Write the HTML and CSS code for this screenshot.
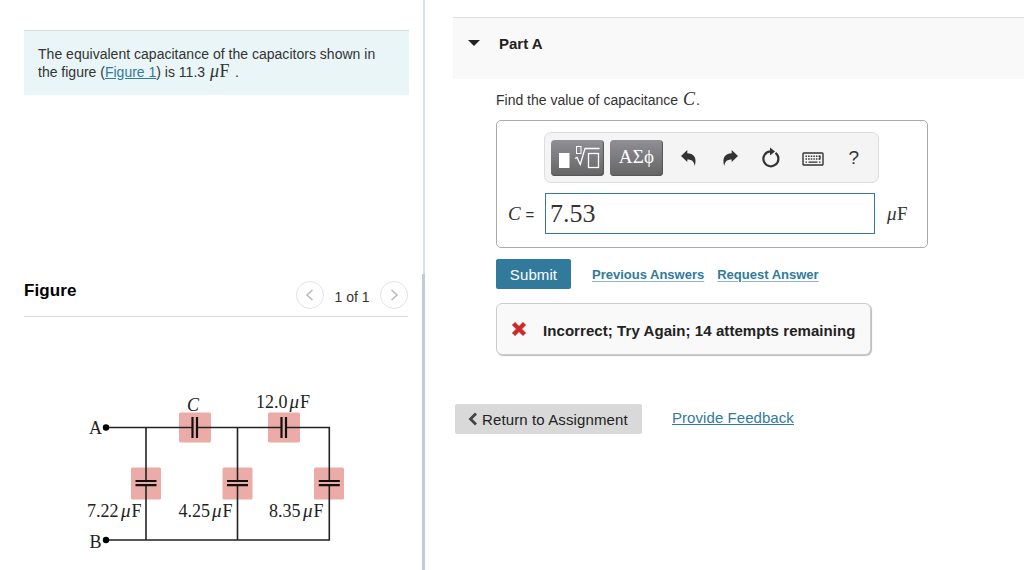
FILE: index.html
```html
<!DOCTYPE html>
<html lang="en">
<head>
    <meta charset="UTF-8">
    <meta name="viewport" content="width=device-width, initial-scale=1.0">
    <title>Equivalent capacitance - Part A</title>
    <link rel="stylesheet" href="styles.css">
</head>
<body>

    <aside class="left-panel">
        <div class="problem">
            <span class="line-one">The equivalent capacitance of the capacitors shown in</span><br>
            the figure (<a href="#figure">Figure 1</a>) is 11.3 <span class="math"><i>μ</i>F</span> .
        </div>

        <section id="figure">
            <div class="figure-header">
                <h2>Figure</h2>
                <div class="pager">
                    <button type="button" class="pager-btn" aria-label="Previous">
                        <svg width="10" height="14" viewBox="0 0 10 14"><path d="M7.5 2 L2 7 L7.5 12"/></svg>
                    </button>
                    <span class="pager-text">1 of 1</span>
                    <button type="button" class="pager-btn" aria-label="Next">
                        <svg width="10" height="14" viewBox="0 0 10 14"><path d="M2.5 2 L8 7 L2.5 12"/></svg>
                    </button>
                </div>
            </div>

            <svg class="circuit" width="384" height="253" viewBox="24 317 384 253">
                <!-- capacitor backgrounds -->
                <g class="cap-bg">
                    <rect x="179" y="412.500" width="32" height="30" rx="1.500"/>
                    <rect x="268" y="412.500" width="32" height="30" rx="1.500"/>
                    <rect x="131" y="467.500" width="30" height="32" rx="1.500"/>
                    <rect x="222.500" y="467.500" width="30" height="32" rx="1.500"/>
                    <rect x="314" y="467.500" width="30" height="32" rx="1.500"/>
                </g>
                <!-- wires -->
                <path class="wire" d="M106 427.500 H192.500 M197.500 427.500 H281 M286.500 427.500 H329.300 V481 M329.300 485.500 V540 H106 M146 427.500 V481 M146 485.500 V540 M237.500 427.500 V481 M237.500 485.500 V540"/>
                <!-- plates -->
                <path class="plate" d="M192.500 417 V438 M197 417 V438 M281.500 417 V438 M286 417 V438 M135.500 481 H156.500 M135.500 485.200 H156.500 M227 481 H248 M227 485.200 H248 M318.800 481 H339.800 M318.800 485.200 H339.800"/>
                <circle cx="106" cy="427.500" r="3.200"/>
                <circle cx="106" cy="540" r="3.200"/>
                <!-- labels -->
                <g class="labels">
                    <text x="89" y="434">A</text>
                    <text x="89.500" y="547.500">B</text>
                    <text x="187" y="411" font-style="italic">C</text>
                    <text x="256" y="407.500">12.0<tspan class="mu" x="289.500">μ</tspan><tspan x="300">F</tspan></text>
                    <text x="87" y="516.500">7.22<tspan class="mu" x="121">μ</tspan><tspan x="131.500">F</tspan></text>
                    <text x="178.500" y="516.500">4.25<tspan class="mu" x="212">μ</tspan><tspan x="222.500">F</tspan></text>
                    <text x="269" y="517">8.35<tspan class="mu" x="303">μ</tspan><tspan x="313.500">F</tspan></text>
                </g>
            </svg>
        </section>
    </aside>

    <div class="divider"><div class="divider-thumb"></div></div>

    <main class="main-content">
        <header class="part-header">
            <span class="caret"></span>
            <h2>Part A</h2>
        </header>

        <section class="part-body">
            <p class="question">Find the value of capacitance <i class="math">C</i>.</p>

            <form class="answer-box">
                <div class="toolbar">
                    <button type="button" class="tool-dark" aria-label="Templates">
                        <svg width="53" height="36" viewBox="0 0 53 36">
                            <rect x="8" y="13" width="10.500" height="15" fill="#fff"/>
                            <g fill="none" stroke="#fff">
                                <rect x="25.500" y="6.500" width="4.500" height="7"/>
                                <path d="M24 18.500 L26 17.500 L29.300 24.500 L34 8.500 H48.500" stroke-width="1.300"/>
                                <rect x="37.500" y="13.500" width="10" height="14" stroke-width="1.300"/>
                            </g>
                        </svg>
                    </button>
                    <button type="button" class="tool-dark greek">ΑΣϕ</button>
                    <button type="button" class="tool" aria-label="Undo">
                        <svg width="18" height="18" viewBox="0 0 18 18"><path d="M1 7 L7.300 1 V4.300 C13 4.500 17.500 8 14.800 17 C14 12.500 12 10.500 7.300 10.500 V13 Z"/></svg>
                    </button>
                    <button type="button" class="tool" aria-label="Redo">
                        <svg width="18" height="18" viewBox="0 0 18 18"><path d="M17 7 L10.700 1 V4.300 C5 4.500 .5 8 3.200 17 C4 12.500 6 10.500 10.700 10.500 V13 Z"/></svg>
                    </button>
                    <button type="button" class="tool" aria-label="Reset">
                        <svg width="20" height="22" viewBox="0 0 20 22"><path d="M14.500 5.800 A7.500 7.500 0 1 1 9 4.300" fill="none" stroke="#333" stroke-width="2.200"/><path d="M9 0.500 L14 4.500 L9 8.500 Z"/></svg>
                    </button>
                    <button type="button" class="tool keyboard" aria-label="Keyboard shortcuts">
                        <svg width="22" height="14" viewBox="0 0 22 14">
                            <rect x="1" y="1" width="20" height="12" rx=".8" fill="none" stroke="#333" stroke-width="1.400"/>
                            <path d="M3.500 4.300 H19 M3.500 7 H19" fill="none" stroke="#333" stroke-width="1.500" stroke-dasharray="1.500 1.100"/>
                            <path d="M3.500 10.200 H5 M6.500 10.200 H15.500 M17 10.200 H18.500 M18 3.500 V7.500" fill="none" stroke="#333" stroke-width="1.300"/>
                        </svg>
                    </button>
                    <button type="button" class="tool help">?</button>
                </div>

                <div class="answer-row">
                    <label for="answer"><i>C</i> <span>=</span></label>
                    <input type="text" id="answer" value="7.53">
                    <span class="unit"><i>μ</i>F</span>
                </div>
            </form>

            <div class="actions">
                <button type="button" class="submit">Submit</button>
                <a href="#" class="previous">Previous Answers</a>
                <a href="#" class="request">Request Answer</a>
            </div>

            <div class="feedback">
                <svg width="16" height="16" viewBox="0 0 16 16"><path d="M2.500 2.500 L13.500 13.500 M13.500 2.500 L2.500 13.500"/></svg>
                <span>Incorrect; Try Again; 14 attempts remaining</span>
            </div>
        </section>

        <footer class="page-footer">
            <a href="#" class="return">
                <svg width="10" height="14" viewBox="0 0 10 14"><path d="M8 1.500 L2.500 7 L8 12.500"/></svg>
                <span>Return to Assignment</span>
            </a>
            <a href="#" class="provide">Provide Feedback</a>
        </footer>
    </main>

</body>
</html>
```

FILE: styles.css
```css
* { box-sizing: border-box; }
body { margin: 0; height: 570px; display: flex; overflow: hidden; background-color: #fff; color: #333; font-family: "Liberation Sans", Arial, sans-serif; font-size: 14px; }
h2, p { margin: 0; }
a { color: #317a9b; }
button { padding: 0; border: none; font-family: inherit; }

/* Left panel */
.left-panel { width: 422px; padding: 30px 0 0 24px; flex-shrink: 0; }
.problem { width: 385px; height: 65px; padding: 14px; border-top: 1px solid #d9dfde; background-color: #e9f5f7; line-height: 18px; white-space: nowrap; }
.problem .math { font-size: 18px; line-height: 0; letter-spacing: .6px; margin: 0 1px; }
.line-one { letter-spacing: .02px; }
.math, .unit { font-family: "Liberation Serif", serif; }
.figure-header { width: 384px; height: 222px; display: flex; justify-content: space-between; align-items: flex-end; padding-bottom: 7px; border-bottom: 1px solid #ddd; }
.figure-header h2 { font-size: 17px; line-height: 20px; color: #000; padding-bottom: 8px; letter-spacing: .1px; }
.pager { display: flex; align-items: center; }
.pager-btn { width: 28px; height: 28px; display: flex; align-items: center; justify-content: center; border: 1px solid #e3e3e3; border-radius: 50%; background-color: #fff; }
.pager-btn path { fill: none; stroke: #bbb; stroke-width: 1.6; }
.pager-text { width: 56px; padding-top: 4px; text-align: center; }
.circuit { display: block; }
.cap-bg { fill: #ebaca8; }
.wire { fill: none; stroke: #222; stroke-width: 1.6; }
.plate { fill: none; stroke: #111; stroke-width: 2.2; }
.labels { font-family: "Liberation Serif", serif; font-size: 18px; fill: #222; }
.labels .mu { font-size: 19px; font-style: italic; }

.divider { width: 3px; flex-shrink: 0; padding-top: 274px; border-right: 2px solid #d6e0ed; }
.divider-thumb { width: 3px; height: 296px; background-color: #bfccdd; }

/* Right panel */
.main-content { flex-grow: 1; padding: 17px 0 0 28px; }
.part-header { height: 62px; display: flex; align-items: flex-start; padding: 17px 0 0 15px; border-top: 1px solid #ddd; background-color: #f9f9f9; }
.part-header h2 { font-size: 15px; line-height: 17px; color: #222; margin-left: 19px; }
.caret { margin-top: 5px; border: 6px solid transparent; border-top: 6px solid #222; border-bottom: none; }
.part-body { padding: 11px 0 0 43px; }
.question { height: 30px; line-height: 20px; white-space: nowrap; }
.question .math { font-size: 18px; line-height: 1; margin: 0 1px; }
.answer-box { width: 432px; height: 128px; padding: 11px 0 0 11px; border: 1px solid #aaa; border-radius: 5px; }
.toolbar { width: 335px; height: 51px; margin-left: 36px; padding: 0 6px; display: flex; align-items: center; border: 1px solid #ddd; border-radius: 7px; background-color: #f4f4f4; }
.tool-dark { width: 53px; height: 36px; flex-shrink: 0; margin-right: 6px; border-radius: 4px; background: linear-gradient(#918f96, #646464); color: #fff; box-shadow: inset -1px -1px 1px #555; }
.tool-dark svg { display: block; }
.toolbar .greek { font-family: "Liberation Serif", serif; font-size: 19px; margin-right: 5px; padding-bottom: 2px; letter-spacing: .3px; }
.tool { width: 41.3px; height: 36px; display: flex; flex-shrink: 0; align-items: center; justify-content: center; background: none; }
.tool svg { fill: #333; }
.keyboard { padding-top: 2px; }
.help { font-size: 19px; color: #333; }
.answer-row { display: flex; align-items: center; margin-top: 10px; }
.answer-row label { width: 37px; font-family: "Liberation Serif", serif; font-size: 19px; white-space: nowrap; }
.answer-row label span { font-family: "Liberation Sans", Arial, sans-serif; font-size: 15px; }
.answer-row input { width: 330px; height: 41px; padding: 0 4px; border: 1px solid #317a9b; background-color: #fff; color: #333; font-family: "Liberation Serif", serif; font-size: 26px; outline: none; }
.unit { font-size: 19px; margin-left: 12px; letter-spacing: .5px; }
.actions { display: flex; align-items: center; margin-top: 11px; font-size: 13px; font-weight: bold; white-space: nowrap; }
.submit { width: 75px; height: 30px; border-radius: 2px; background-color: #317a9b; color: #fff; font-size: 15px; letter-spacing: .1px; }
.actions a { text-decoration-color: #8fb9ca; text-underline-offset: 2px; }
.previous { margin-left: 21px; }
.request { margin-left: 13px; }
.feedback { width: 375px; height: 52px; display: flex; align-items: center; margin-top: 14px; padding-left: 14px; border: 1px solid #ccc; border-radius: 6px; background-color: #f9f9f9; box-shadow: 1px 1px 1px #bbb; color: #222; font-size: 15px; font-weight: bold; white-space: nowrap; }
.feedback path { fill: none; stroke: #cd2a2c; stroke-width: 4.4; }
.feedback span { margin-left: 16px; padding-top: 2px; letter-spacing: .07px; }
.page-footer { display: flex; align-items: flex-start; margin: 49px 0 0 2px; font-size: 15px; white-space: nowrap; }
.return { width: 187px; height: 30px; display: flex; align-items: center; padding-left: 13px; border-radius: 2px; background-color: #d9d9d9; color: #222; text-decoration: none; }
.return path { fill: none; stroke: #444; stroke-width: 2.8; }
.return span { margin-left: 4px; letter-spacing: .12px; }
.provide { margin: 5px 0 0 30px; letter-spacing: .06px; }
```
